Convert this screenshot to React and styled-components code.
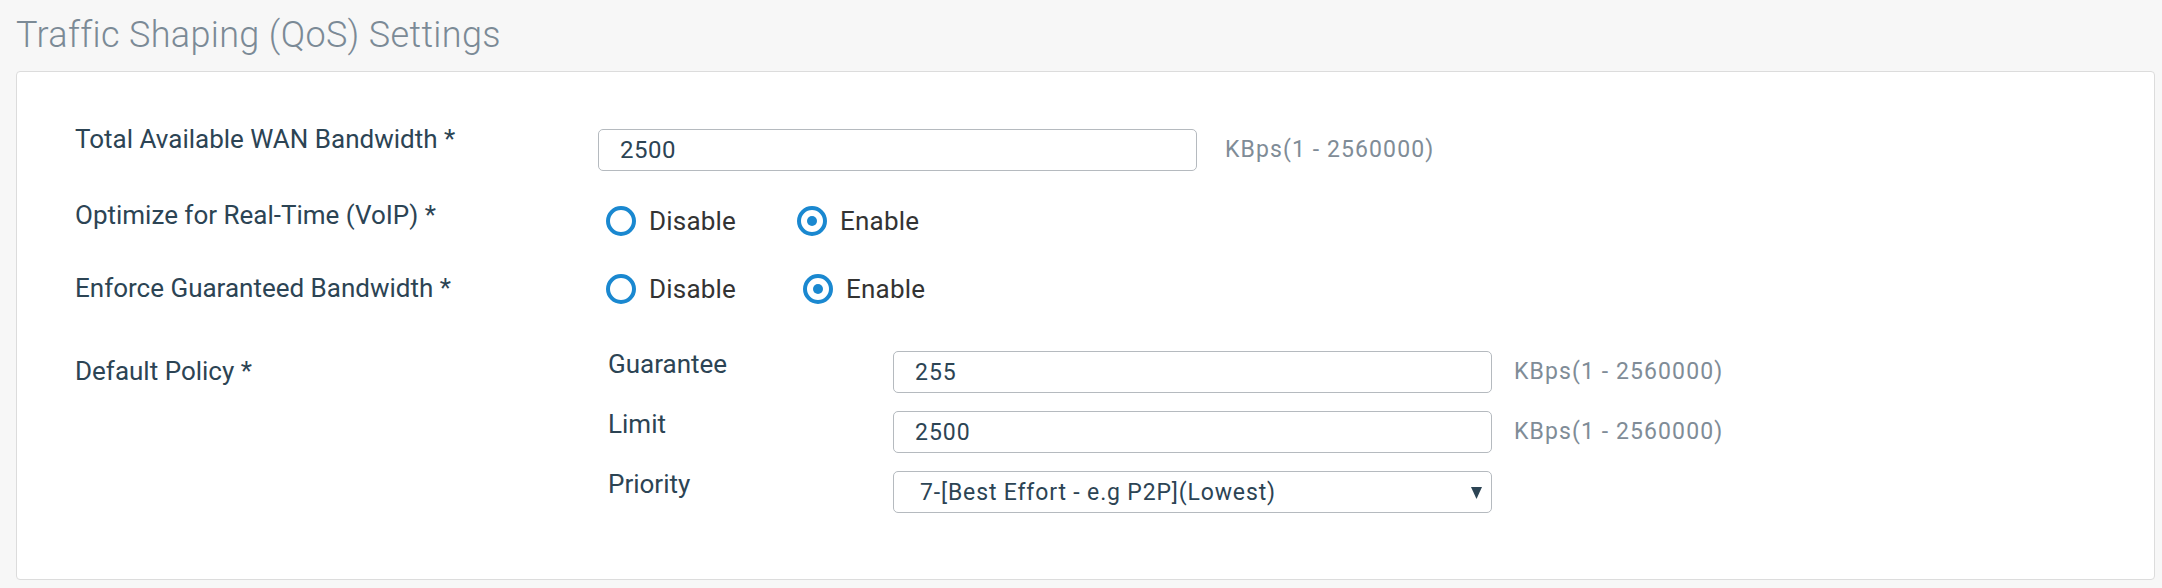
import React from "react";
import styled, { createGlobalStyle } from "styled-components";

const GlobalStyle = createGlobalStyle`
  html, body { margin: 0; padding: 0; background: #f7f7f7; }
  body { font-family: Roboto, "Liberation Sans", sans-serif; }
  * { box-sizing: border-box; }
`;

const Page = styled.div`
  width: 2162px;
  height: 588px;
  padding: 14px 7px 8px 16px;
  display: flex;
  flex-direction: column;
`;

const Title = styled.h1`
  margin: 0 0 15px;
  font-size: 36px;
  line-height: 42px;
  font-weight: 300;
  letter-spacing: 0.35px;
  color: #7b8a96;
`;

const Panel = styled.section`
  flex: 1;
  background: #fff;
  border: 1px solid #dcdcdc;
  border-radius: 4px;
  padding: 52px 0 0 58px;
  display: flex;
  flex-direction: column;
`;

const FormRow = styled.div`
  display: flex;
  align-items: flex-start;
  margin-top: ${(p) => p.$gap || 0}px;
`;

const Label = styled.div`
  width: 523px;
  flex-shrink: 0;
  margin-top: ${(p) => p.$offset || 0}px;
  font-size: 26px;
  line-height: 30px;
  color: #2c4454;
`;

const Control = styled.div`
  display: flex;
  align-items: flex-start;
`;

const TextInput = styled.input`
  width: 599px;
  height: 42px;
  margin-top: ${(p) => p.$offset || 0}px;
  padding: 0 21px;
  border: 1px solid #b5babf;
  border-radius: 5px;
  background: #fff;
  font-family: Roboto, "Liberation Sans", sans-serif;
  font-size: ${(p) => p.$size || 23}px;
  letter-spacing: ${(p) => p.$spacing || 1}px;
  color: #2c4454;
  outline: none;
`;

const Units = styled.span`
  margin-left: ${(p) => p.$gap}px;
  margin-top: ${(p) => p.$offset}px;
  font-size: 23px;
  line-height: 30px;
  letter-spacing: 1.1px;
  color: #7f8c97;
`;

const RadioGroup = styled.div`
  display: grid;
  grid-template-columns: ${(p) => p.$first}px auto;
  margin: ${(p) => p.$offset || 0}px 0 0 8px;
`;

const RadioOption = styled.label`
  display: flex;
  align-items: center;
  gap: 13px;
  height: 30px;
  font-size: 26px;
  line-height: 30px;
  letter-spacing: 0.2px;
  color: #333;
  cursor: pointer;
`;

const RadioCircle = styled.span`
  width: 30px;
  height: 30px;
  flex-shrink: 0;
  border: 4px solid #1a88d0;
  border-radius: 50%;
  display: flex;
  align-items: center;
  justify-content: center;
  &::after {
    content: "";
    width: 10px;
    height: 10px;
    border-radius: 50%;
    background: ${(p) => (p.$checked ? "#1a88d0" : "transparent")};
  }
`;

const SubForm = styled.div`
  display: flex;
  flex-direction: column;
  gap: 15px;
`;

const SubRow = styled.div`
  display: flex;
  align-items: flex-start;
`;

const SubLabel = styled.div`
  width: 295px;
  flex-shrink: 0;
  padding-left: 10px;
  margin-top: 1px;
  font-size: 26px;
  line-height: 30px;
  color: #2c4454;
`;

const SelectBox = styled.div`
  width: 599px;
  height: 42px;
  margin-top: 3px;
  display: flex;
  align-items: center;
  padding-right: 9px;
  border: 1px solid #b5babf;
  border-radius: 5px;
  background: #fff;
`;

const Select = styled.select`
  flex: 1;
  height: 100%;
  appearance: none;
  -webkit-appearance: none;
  border: none;
  background: transparent;
  padding: 0 0 0 26px;
  font-family: Roboto, "Liberation Sans", sans-serif;
  font-size: 23px;
  letter-spacing: 0.85px;
  color: #2c4454;
  outline: none;
`;

const Caret = styled.svg`
  width: 11px;
  height: 13px;
  flex-shrink: 0;
`;

function Radio({ name, checked, children }) {
  return (
    <RadioOption>
      <RadioCircle $checked={checked} />
      <input type="radio" name={name} defaultChecked={checked} hidden />
      {children}
    </RadioOption>
  );
}

export default function App() {
  return (
    <>
      <GlobalStyle />
      <Page>
        <Title>Traffic Shaping (QoS) Settings</Title>
        <Panel>
          <FormRow>
            <Label>Total Available WAN Bandwidth *</Label>
            <Control>
              <TextInput defaultValue="2500" $offset={5} $size={24} $spacing={0.5} />
              <Units $gap={28} $offset={11}>KBps(1 - 2560000)</Units>
            </Control>
          </FormRow>

          <FormRow $gap={29}>
            <Label>Optimize for Real-Time (VoIP) *</Label>
            <RadioGroup $first={191} $offset={6}>
              <Radio name="voip">Disable</Radio>
              <Radio name="voip" checked>Enable</Radio>
            </RadioGroup>
          </FormRow>

          <FormRow $gap={37}>
            <Label>Enforce Guaranteed Bandwidth *</Label>
            <RadioGroup $first={197} $offset={1}>
              <Radio name="enforce">Disable</Radio>
              <Radio name="enforce" checked>Enable</Radio>
            </RadioGroup>
          </FormRow>

          <FormRow $gap={44}>
            <Label $offset={8}>Default Policy *</Label>
            <SubForm>
              <SubRow>
                <SubLabel>Guarantee</SubLabel>
                <TextInput defaultValue="255" $offset={3} />
                <Units $gap={22} $offset={9}>KBps(1 - 2560000)</Units>
              </SubRow>
              <SubRow>
                <SubLabel>Limit</SubLabel>
                <TextInput defaultValue="2500" $offset={3} />
                <Units $gap={22} $offset={9}>KBps(1 - 2560000)</Units>
              </SubRow>
              <SubRow>
                <SubLabel>Priority</SubLabel>
                <SelectBox>
                  <Select defaultValue="7">
                    <option value="7">7-[Best Effort - e.g P2P](Lowest)</option>
                  </Select>
                  <Caret viewBox="0 0 11 13">
                    <polygon points="0,1 11,1 5.5,13" fill="#2c4454" />
                  </Caret>
                </SelectBox>
              </SubRow>
            </SubForm>
          </FormRow>
        </Panel>
      </Page>
    </>
  );
}
